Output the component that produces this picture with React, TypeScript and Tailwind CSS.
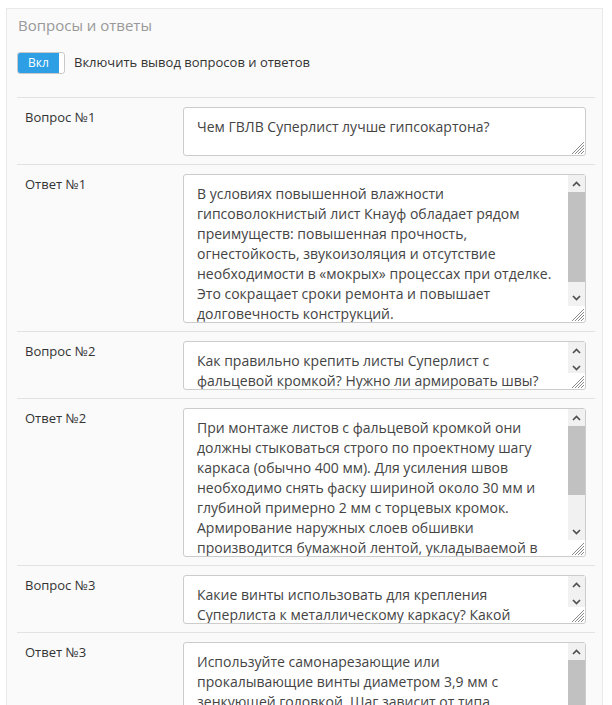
import { useState } from 'react';

interface Row {
  label: string;
  value: string;
  tall?: boolean;
  scroll?: boolean;
  thumb?: string;
}

const rows: Row[] = [
  { label: 'Вопрос №1', value: 'Чем ГВЛВ Суперлист лучше гипсокартона?' },
  {
    label: 'Ответ №1',
    value:
      'В условиях повышенной влажности гипсоволокнистый лист Кнауф обладает рядом преимуществ: повышенная прочность, огнестойкость, звукоизоляция и отсутствие необходимости в «мокрых» процессах при отделке. Это сокращает сроки ремонта и повышает долговечность конструкций.',
    tall: true,
    scroll: true,
    thumb: 'h-[90px]',
  },
  {
    label: 'Вопрос №2',
    value: 'Как правильно крепить листы Суперлист с фальцевой кромкой? Нужно ли армировать швы?',
    scroll: true,
  },
  {
    label: 'Ответ №2',
    value:
      'При монтаже листов с фальцевой кромкой они должны стыковаться строго по проектному шагу каркаса (обычно 400 мм). Для усиления швов необходимо снять фаску шириной около 30 мм и глубиной примерно 2 мм с торцевых кромок. Армирование наружных слоев обшивки производится бумажной лентой, укладываемой в шпаклёвку.',
    tall: true,
    scroll: true,
    thumb: 'h-[69px]',
  },
  {
    label: 'Вопрос №3',
    value: 'Какие винты использовать для крепления Суперлиста к металлическому каркасу? Какой рекомендуемый шаг крепления?',
    scroll: true,
  },
  {
    label: 'Ответ №3',
    value:
      'Используйте самонарезающие или прокалывающие винты диаметром 3,9 мм с зенкующей головкой. Шаг зависит от типа конструкции: для стен — не более 250 мм, для потолков — не более 200 мм.',
    tall: true,
    scroll: true,
    thumb: 'h-[64px]',
  },
];

function Chevron({ down }: { down?: boolean }) {
  return (
    <svg width="9" height="6" viewBox="0 0 9 6" className={down ? 'rotate-180' : ''}>
      <polyline points="1,5 4.5,1.5 8,5" fill="none" stroke="#505050" strokeWidth="1.7" />
    </svg>
  );
}

function Grip() {
  return (
    <svg width="15" height="15" viewBox="0 0 15 15" className="absolute bottom-[1px] right-[1px]">
      <g stroke="#8a8a8a" strokeWidth="1">
        <line x1="14" y1="2" x2="2" y2="14" />
        <line x1="14" y1="5" x2="5" y2="14" />
        <line x1="14" y1="8" x2="8" y2="14" />
        <line x1="14" y1="11" x2="11" y2="14" />
      </g>
    </svg>
  );
}

function Scrollbar({ thumb }: { thumb?: string }) {
  return (
    <div className="absolute right-[1px] top-[1px] bottom-[17px] flex w-[17px] flex-col bg-[#f1f1f1]">
      <div className="flex h-[17px] shrink-0 items-center justify-center">
        <Chevron />
      </div>
      <div className="flex-1 overflow-hidden">{thumb && <div className={`w-full bg-[#c1c1c1] ${thumb}`} />}</div>
      <div className="flex h-[17px] shrink-0 items-center justify-center">
        <Chevron down />
      </div>
    </div>
  );
}

export default function App() {
  const [enabled, setEnabled] = useState(true);

  return (
    <div
      className="h-[705px] overflow-hidden bg-white pt-[8px] pl-[6px]"
      style={{ fontFamily: '"Open Sans", "Liberation Sans", sans-serif' }}
    >
      <div className="w-[597px] border border-[#e9e9e9] bg-[#fafafa] pl-[10px] pr-[7px] pt-[5px]">
        <h3 className="pl-px text-[15px] leading-[22px] text-[#999]">Вопросы и ответы</h3>

        <div className="mt-[16px] flex items-center gap-[9px]">
          <button
            type="button"
            onClick={() => setEnabled(!enabled)}
            className="flex h-[22px] w-[48px] overflow-hidden rounded-[3px] border border-[#c9c9c9]"
          >
            <span className="flex h-full w-[41px] items-center justify-center bg-[#2e9fe5] text-[12px] text-white">
              {enabled ? 'Вкл' : 'Выкл'}
            </span>
            <span className="h-full flex-1 rounded-r-[3px] bg-white" />
          </button>
          <span className="text-[13px] text-[#333]">Включить вывод вопросов и ответов</span>
        </div>

        <div className="mt-[23px]">
          {rows.map((row) => (
            <div key={row.label} className="flex border-t border-[#e2e2e2]">
              <div className="w-[158px] shrink-0 pl-[8px] pt-[9px] text-[13px] leading-[20px] text-[#333]">
                {row.label}
              </div>
              <div className="flex-1 pb-[8px] pl-[8px] pr-[9px] pt-[9px]">
                <div className="relative">
                  <textarea
                    defaultValue={row.value}
                    className={`block w-full resize-none overflow-hidden rounded-[3px] border border-[#ccc] bg-white pb-[8px] pt-[9px] pl-[13px] text-[14px] leading-[20px] text-[#444] outline-none ${
                      row.tall ? 'h-[149px]' : 'h-[49px]'
                    } ${row.scroll ? 'pr-[30px]' : 'pr-[13px]'}`}
                  />
                  {row.scroll && <Scrollbar thumb={row.thumb} />}
                  <Grip />
                </div>
              </div>
            </div>
          ))}
        </div>
      </div>
    </div>
  );
}
